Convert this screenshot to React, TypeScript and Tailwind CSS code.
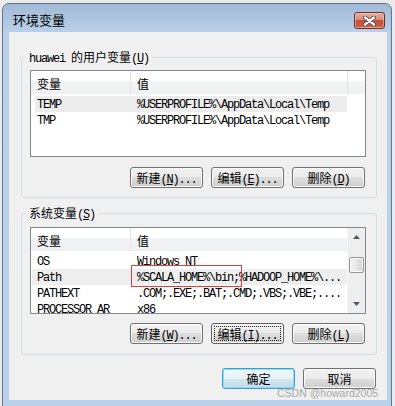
import React from "react";

const MONO = "font-['Liberation_Mono',monospace] text-[12px] leading-[14px] tracking-[-1.2px]";
const MONO_U = "font-['Liberation_Mono',monospace] text-[12px] leading-[14px] tracking-[-1.2px] underline underline-offset-[1px]";
const CJK = "font-['Noto_Sans_CJK_SC',sans-serif] text-[12px] leading-[14px]";

function Txt({ s }: { s: string }) {
  const parts: React.ReactNode[] = [];
  let i = 0;
  let key = 0;
  while (i < s.length) {
    const ch = s[i];
    if (ch === "&") {
      parts.push(
        <span key={key++} className={MONO_U}>
          {s[i + 1]}
        </span>
      );
      i += 2;
      continue;
    }
    const ascii = ch.charCodeAt(0) < 128;
    let j = i;
    while (j < s.length && s[j] !== "&" && (s[j].charCodeAt(0) < 128) === ascii) j++;
    parts.push(
      <span key={key++} className={ascii ? MONO : CJK}>
        {s.slice(i, j)}
      </span>
    );
    i = j;
  }
  return <span className="inline-flex items-baseline h-[14px] whitespace-pre align-top">{parts}</span>;
}

function Btn({ label, kind }: { label: string; kind?: "default" | "focus" }) {
  if (kind === "default") {
    return (
      <div className="w-[73px] h-[21px] rounded-[3px] border border-[#3c9fd3] shadow-[inset_0_0_0_1px_#8fdcf8] bg-[linear-gradient(to_bottom,#f1f8fb,#e6f2f8_50%,#d3e6ef_50%,#c4dbe6)] flex items-center justify-center text-black">
        <Txt s={label} />
      </div>
    );
  }
  if (kind === "focus") {
    return (
      <div className="w-[73px] h-[21px] rounded-[3px] border border-[#606060] shadow-[inset_0_0_0_1px_#fbfbfb] bg-[linear-gradient(to_bottom,#f2f2f2,#ebebeb_50%,#dddddd_50%,#cfcfcf)] flex items-center justify-center text-black outline-1 outline-dotted outline-[#222] outline-offset-[-4px]">
        <Txt s={label} />
      </div>
    );
  }
  return (
    <div className="w-[73px] h-[21px] rounded-[3px] border border-[#707070] shadow-[inset_0_0_0_1px_#fbfbfb] bg-[linear-gradient(to_bottom,#f2f2f2,#ebebeb_50%,#dddddd_50%,#cfcfcf)] flex items-center justify-center text-black">
      <Txt s={label} />
    </div>
  );
}

function UserList() {
  return (
    <div className="w-[336px] h-[87px] border border-[#828790] bg-white overflow-hidden flex flex-col text-black">
      <div className="h-[23px] shrink-0 flex bg-[linear-gradient(to_bottom,#ffffff_0%,#ffffff_45%,#f2f3f5_45%,#f0f1f3_100%)]">
        <div className="w-[100px] border-r border-[#e2e3e6] pl-[6px] pt-[2px] flex items-center">
          <Txt s="变量" />
        </div>
        <div className="w-[217px] border-r border-[#e2e3e6] pl-[6px] pt-[2px] flex items-center">
          <Txt s="值" />
        </div>
        <div className="flex-1" />
      </div>
      <div className="pt-[2px] flex flex-col">
        <div className="h-[16px] shrink-0 ml-[4px] w-[312px] bg-[#ececec] flex items-center">
          <div className="w-[96px] pl-[2px] pt-[1px] flex items-center">
            <Txt s="TEMP" />
          </div>
          <div className="pl-[6px] pt-[1px] whitespace-nowrap flex items-center">
            <Txt s="%USERPROFILE%\AppData\Local\Temp" />
          </div>
        </div>
        <div className="h-[16px] shrink-0 flex items-center">
          <div className="w-[100px] pl-[6px] pt-[1px] flex items-center">
            <Txt s="TMP" />
          </div>
          <div className="pl-[6px] pt-[1px] whitespace-nowrap flex items-center">
            <Txt s="%USERPROFILE%\AppData\Local\Temp" />
          </div>
        </div>
      </div>
    </div>
  );
}

function SysList() {
  const rows: [string, string, boolean][] = [
    ["OS", "Windows NT", false],
    ["Path", "%SCALA_HOME%\\bin;%HADOOP_HOME%\\...", true],
    ["PATHEXT", ".COM;.EXE;.BAT;.CMD;.VBS;.VBE;....", false],
    ["PROCESSOR_AR", "x86", false],
  ];
  return (
    <div className="w-[336px] h-[87px] border border-[#828790] bg-white overflow-hidden flex text-black">
      <div className="w-[316px] flex flex-col overflow-hidden">
        <div className="h-[23px] shrink-0 flex bg-[linear-gradient(to_bottom,#ffffff_0%,#ffffff_45%,#f2f3f5_45%,#f0f1f3_100%)]">
          <div className="w-[100px] border-r border-[#e2e3e6] pl-[6px] pt-[2px] flex items-center">
            <Txt s="变量" />
          </div>
          <div className="flex-1 pl-[6px] pt-[2px] flex items-center">
            <Txt s="值" />
          </div>
        </div>
        <div className="pt-[2px] flex flex-col">
          {rows.map(([k, v, sel]) => (
            <div key={k} className={sel ? "h-[16px] shrink-0 ml-[1px] bg-[#eeeeee] flex items-center" : "h-[16px] shrink-0 flex items-center"}>
              <div className={sel ? "w-[99px] pl-[5px] pt-[1px] flex items-center" : "w-[100px] pl-[6px] pt-[1px] flex items-center"}>
                <Txt s={k} />
              </div>
              <div className="pl-[6px] pt-[1px] whitespace-nowrap flex items-center">
                <Txt s={v} />
              </div>
            </div>
          ))}
        </div>
      </div>
      <div className="w-[18px] h-full bg-[#eeeeee] border-l border-[#f8f8f8] flex flex-col items-center">
        <div className="h-[18px] w-full flex items-center justify-center">
          <svg width="7" height="4" viewBox="0 0 7 4">
            <polygon points="3.5,0 7,4 0,4" fill="#505a66" />
          </svg>
        </div>
        <div className="h-[11px]" />
        <div className="w-[15px] h-[16px] rounded-[2px] border border-[#959595] shadow-[inset_0_0_0_1px_#fafafa] bg-[linear-gradient(to_right,#f4f4f4,#e6e6e6_50%,#d4d4d4)]" />
        <div className="flex-1" />
        <div className="h-[18px] w-full flex items-center justify-center">
          <svg width="7" height="4" viewBox="0 0 7 4">
            <polygon points="0,0 7,0 3.5,4" fill="#505a66" />
          </svg>
        </div>
      </div>
    </div>
  );
}

export default function App() {
  return (
    <div className="relative w-[395px] h-[406px] overflow-hidden bg-[#eaeaea] pt-[3px] pl-[2px]">
      <div className="w-[390px] h-[412px] rounded-t-[7px] border border-[#62768d] bg-[linear-gradient(to_bottom,#a1bad7_0px,#b1c8e2_18px,#bad0e9_29px,#b9d1ea_100%)] pl-[6px] pr-[4px] flex flex-col">
        <div className="h-[28px] shrink-0 flex items-start justify-between">
          <div className="ml-[4px] mt-[9px] h-[14px] flex text-black">
            <span className="font-['Noto_Sans_CJK_SC',sans-serif] text-[13px] leading-[14px]">环境变量</span>
          </div>
          <div className="mt-[8px] mr-[2px] w-[31px] h-[17px] rounded-[3px] border border-[#6e3129] bg-[linear-gradient(to_bottom,#e6ae9f,#d98c7a_45%,#c4503c_50%,#c65a45_85%,#d27360)] shadow-[inset_0_0_0_1px_rgba(255,220,210,0.45)] flex items-center justify-center">
            <svg width="13" height="10" viewBox="0 0 13 10">
              <path d="M2 1.5 L11 8.5 M11 1.5 L2 8.5" stroke="#4d3b38" strokeWidth="4" strokeLinecap="round" />
              <path d="M2 1.5 L11 8.5 M11 1.5 L2 8.5" stroke="#ffffff" strokeWidth="2.4" strokeLinecap="round" />
            </svg>
          </div>
        </div>
        <div className="w-[378px] h-[368px] shrink-0 bg-[#f0f0f0] pl-[12px] flex flex-col">
          <fieldset className="mt-[18px] w-[356px] rounded-[3px] border border-[#d5dfe5] pl-[8px] pr-[10px] pt-[6px] pb-[9px] flex flex-col">
            <legend className="ml-[-4px] px-[3px] h-[14px] text-black">
              <div className="flex h-[14px]">
                <Txt s="huawei 的用户变量(&U)" />
              </div>
            </legend>
            <UserList />
            <div className="mt-[10px] pr-[1px] flex justify-end gap-[8px]">
              <Btn label="新建(&N)..." />
              <Btn label="编辑(&E)..." />
              <Btn label="删除(&D)" />
            </div>
          </fieldset>
          <fieldset className="mt-[8px] w-[356px] rounded-[3px] border border-[#d5dfe5] pl-[8px] pr-[10px] pt-[7px] pb-[10px] flex flex-col">
            <legend className="ml-[-4px] px-[3px] h-[14px] text-black">
              <div className="flex h-[14px]">
                <Txt s="系统变量(&S)" />
              </div>
            </legend>
            <SysList />
            <div className="mt-[9px] pr-[1px] flex justify-end gap-[8px]">
              <Btn label="新建(&W)..." />
              <Btn label="编辑(&I)..." kind="focus" />
              <Btn label="删除(&L)" />
            </div>
          </fieldset>
          <div className="mt-[13px] pr-[11px] flex justify-end gap-[8px]">
            <Btn label="确定" kind="default" />
            <Btn label="取消" />
          </div>
        </div>
      </div>
      <div className="absolute left-[131px] top-[265px] w-[111px] h-[22px] border border-[#e23b3b]" />
      <div className="absolute left-[277px] top-[386px] font-['Liberation_Sans',sans-serif] text-[10.5px] leading-[14px] text-[#a8a8a8] whitespace-nowrap">
        CSDN @howard2005
      </div>
    </div>
  );
}
